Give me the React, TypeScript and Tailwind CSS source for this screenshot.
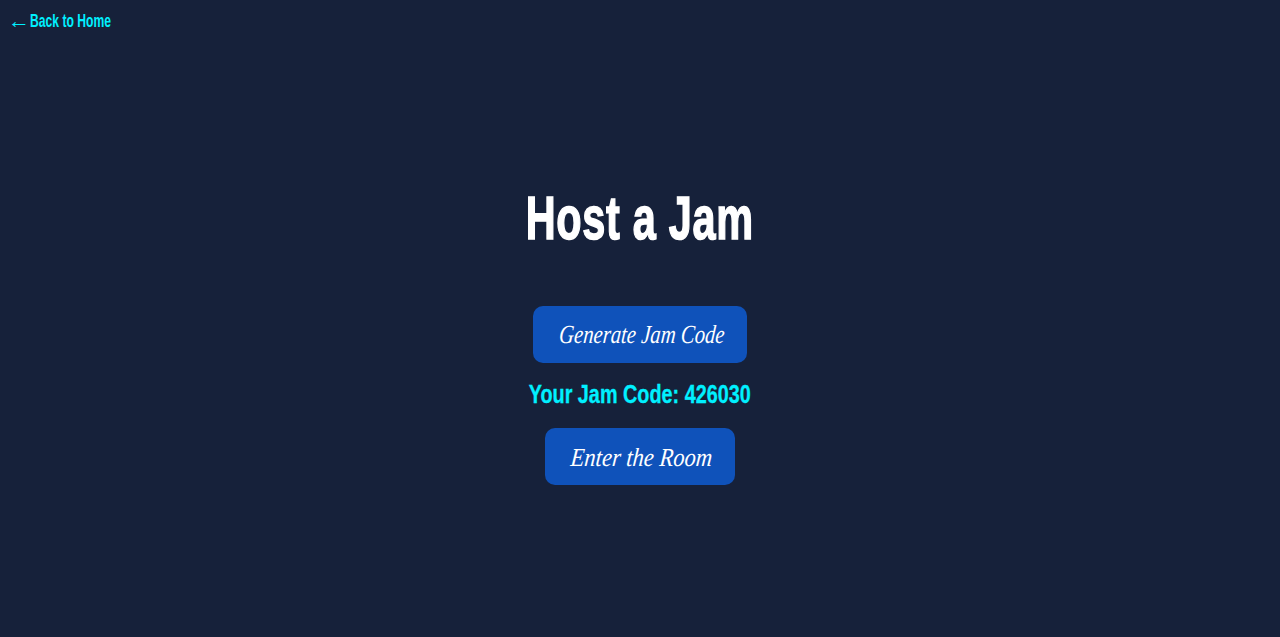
export default function App() {
  return (
    <div className="min-h-[637px] bg-[#16213a] flex flex-col font-['Liberation_Sans',sans-serif]">
      <a className="h-[32px] pl-[8px] pt-[9px] flex items-center text-[#00f0ff] whitespace-nowrap">
        <span className="text-[22px] w-[22px] leading-none">←</span>
        <span className="text-[19px] leading-none font-bold inline-block origin-left scale-x-[0.64]">Back to Home</span>
      </a>
      <main className="flex-1 flex flex-col items-center justify-center">
        <h1 className="text-white text-[61px] leading-[68px] font-bold mb-[54px] scale-x-[0.68] tracking-[1px] [-webkit-text-stroke:1.5px_white] whitespace-nowrap">Host a Jam</h1>
        <button className="bg-[#0f52ba] text-white rounded-[10px] w-[214px] h-[57px] flex items-center justify-center pl-[3px]">
          <span className="text-[26px] italic font-['Liberation_Serif',serif] scale-x-[0.796] -skew-x-6 whitespace-nowrap">Generate Jam Code</span>
        </button>
        <p className="text-[#00f0ff] text-[26px] leading-[32px] font-bold mt-[15px] mb-[18px] scale-x-[0.762] [-webkit-text-stroke:0.3px_#00f0ff] whitespace-nowrap">Your Jam Code: 426030</p>
        <button className="bg-[#0f52ba] text-white rounded-[10px] w-[190px] h-[57px] flex items-center justify-center pl-[3px] pt-[1px]">
          <span className="text-[26px] italic font-['Liberation_Serif',serif] scale-x-[0.867] -skew-x-6 whitespace-nowrap">Enter the Room</span>
        </button>
      </main>
    </div>
  );
}
